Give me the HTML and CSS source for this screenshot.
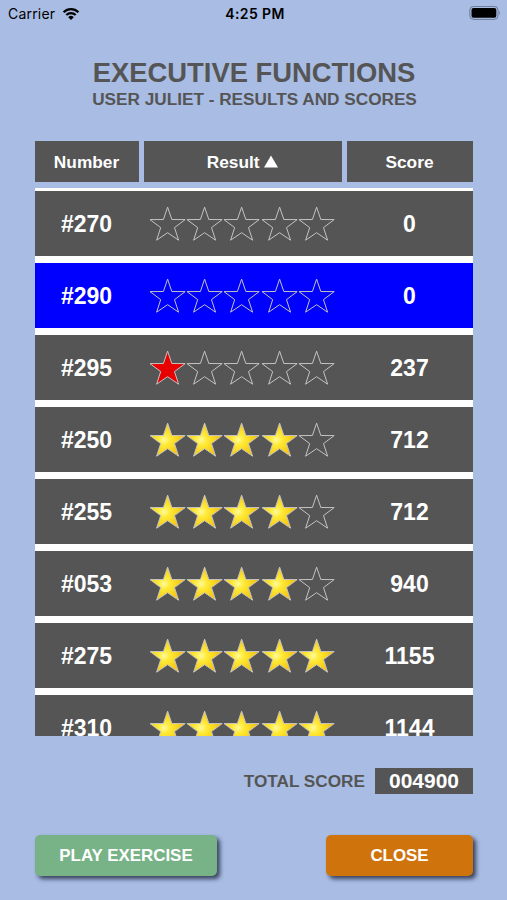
FILE: index.html
```html
<!DOCTYPE html>
<html lang="en">
<head>
  <meta charset="UTF-8">
  <title>Executive Functions</title>
  <link rel="stylesheet" href="styles.css">
</head>
<body>
  <svg width="0" height="0" class="defs">
    <defs>
      <radialGradient id="gold" cx="0.4" cy="0.5" r="0.55">
        <stop offset="0" stop-color="#fffa9c"/>
        <stop offset="0.3" stop-color="#ffea38"/>
        <stop offset="1" stop-color="#f4c208"/>
      </radialGradient>
      <symbol id="star" viewBox="0 0 37.3 36">
        <path d="M18.6 1.1L22.8 13.5L36.2 13.6L25.5 21.6L29.6 34.2L18.6 26.7L7.6 34.2L11.7 21.6L1 13.6L14.4 13.5Z"/>
      </symbol>
    </defs>
  </svg>

  <div class="status">
    <div class="carrier">
      Carrier
      <svg width="18" height="14" viewBox="0 0 18 14">
        <path d="M1.6 5.2A10.5 10.5 0 0 1 16.4 5.2M4.3 8A6.6 6.6 0 0 1 13.7 8" fill="none" stroke="#000" stroke-width="2.2"/>
        <path d="M9 13L6.2 10.2A4 4 0 0 1 11.8 10.2Z"/>
      </svg>
    </div>
    <div class="time">4:25 PM</div>
    <div class="battery">
      <svg width="33" height="15" viewBox="0 0 33 15">
        <rect x="0.8" y="0.4" width="28.2" height="13" rx="3.8" fill="none" stroke="#6b7892" stroke-width="1"/>
        <rect x="2.5" y="2.1" width="24.8" height="9.6" rx="2"/>
        <path d="M30.2 4.8Q32 6.9 30.2 9Z" fill="#6b7892"/>
      </svg>
    </div>
  </div>

  <h1>EXECUTIVE FUNCTIONS</h1>
  <h2>USER JULIET - RESULTS AND SCORES</h2>

  <div class="columns head">
    <div>Number</div>
    <div>Result
      <svg class="sort" width="14" height="13" viewBox="0 0 14 13"><path d="M7 0.5L14 12.5H0Z" fill="#fff"/></svg>
    </div>
    <div>Score</div>
  </div>

  <div class="list" id="list"></div>

  <div class="total">
    <span>TOTAL SCORE</span>
    <span class="total-value">004900</span>
  </div>

  <div class="buttons">
    <button class="play-btn">PLAY EXERCISE</button>
    <button class="close-btn">CLOSE</button>
  </div>

  <script>
    const results = [
      { number: '#270', stars: 0, score: 0 },
      { number: '#290', stars: 0, score: 0, selected: true },
      { number: '#295', stars: 1, score: 237 },
      { number: '#250', stars: 4, score: 712 },
      { number: '#255', stars: 4, score: 712 },
      { number: '#053', stars: 4, score: 940 },
      { number: '#275', stars: 5, score: 1155 },
      { number: '#310', stars: 5, score: 1144 }
    ];

    function starRow(count) {
      let html = '';
      for (let i = 0; i < 5; i++) {
        // a single star is shown in red
        const type = i >= count ? 'empty' : (count === 1 ? 'red' : 'gold');
        html += `<svg class="star ${type}"><use href="#star"/></svg>`;
      }
      return html;
    }

    document.getElementById('list').innerHTML = results.map(r => `
      <div class="columns row ${r.selected ? 'selected' : ''}">
        <div class="cell">${r.number}</div>
        <div class="stars">${starRow(r.stars)}</div>
        <div class="cell">${r.score}</div>
      </div>`).join('');
  </script>
</body>
</html>
```

FILE: styles.css
```css
* {
  box-sizing: border-box;
}

body {
  margin: 0;
  height: 900px;
  overflow: hidden;
  background-color: #a8bce4;
  color: #555555;
  font-family: "Liberation Sans", Arial, sans-serif;
  font-weight: bold;
}

.defs {
  display: block;
}

.status {
  display: grid;
  grid-template-columns: 1fr auto 1fr;
  align-items: center;
  height: 27px;
  padding: 0 5px 0 8px;
  color: #000;
  font-family: Inter, sans-serif;
  font-size: 14px;
}

.carrier {
  display: flex;
  align-items: center;
  gap: 7px;
  font-weight: normal;
  letter-spacing: 0.2px;
}

.time {
  font-weight: 600;
  letter-spacing: 0.4px;
}

.battery {
  display: flex;
  justify-content: flex-end;
}

h1 {
  margin: 30px 0 0;
  padding-left: 1px;
  font-size: 27.4px;
  line-height: 32px;
  text-align: center;
}

h2 {
  margin: 0 0 32px;
  padding-left: 2px;
  font-size: 17.2px;
  line-height: 20px;
  text-align: center;
}

.columns {
  display: grid;
  grid-template-columns: 104px 198px 126px;
  column-gap: 5px;
  align-items: center;
  width: 438px;
  margin: 0 auto 0 35px;
  color: #fff;
  text-align: center;
}

.head {
  font-size: 17.3px;
}

.head div {
  height: 41px;
  padding-right: 1px;
  line-height: 42px;
  background-color: #555;
}

.list {
  width: 438px;
  height: 548px;
  margin: 6px 0 0 35px;
  padding-top: 3px;
  overflow: hidden;
  background-color: #fff;
}

.row {
  height: 65px;
  margin: 0 0 7px;
  background-color: #555;
  font-size: 23px;
}

.cell {
  padding: 1px 1px 0 0;
}

.selected {
  background-color: #0000ff;
}

.stars {
  display: flex;
  justify-content: center;
  padding-right: 2px;
}

.star {
  width: 37.3px;
  height: 36px;
  stroke: #c4c4c4;
  stroke-width: 1;
}

.empty {
  fill: none;
}

.red {
  fill: #e90000;
}

.gold {
  fill: url(#gold);
}

.total {
  display: flex;
  justify-content: flex-end;
  align-items: center;
  gap: 10px;
  height: 26px;
  margin: 32px 34px 0 0;
  font-size: 17.2px;
}

.total-value {
  width: 98px;
  background-color: #555;
  color: #fff;
  font-size: 21px;
  line-height: 26px;
  text-align: center;
}

.buttons {
  display: flex;
  justify-content: space-between;
  margin: 41px 34px 0 35px;
}

button {
  height: 41px;
  padding: 0;
  border: none;
  border-radius: 5px;
  box-shadow: 3px 3px 4px rgba(20, 25, 50, 0.75);
  color: #fff;
  font-family: inherit;
  font-size: 16.9px;
  font-weight: bold;
}

.play-btn {
  width: 182px;
  background-color: #77b387;
}

.close-btn {
  width: 147px;
  background-color: #cf730d;
}
```
